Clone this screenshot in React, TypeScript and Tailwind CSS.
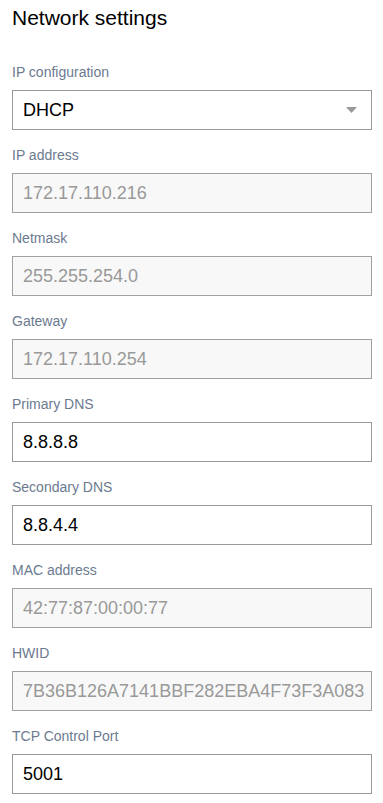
import React from 'react';

type Field = { label: string; value: string; disabled?: boolean; select?: boolean };

const FIELDS: Field[] = [
  { label: 'IP configuration', value: 'DHCP', select: true },
  { label: 'IP address', value: '172.17.110.216', disabled: true },
  { label: 'Netmask', value: '255.255.254.0', disabled: true },
  { label: 'Gateway', value: '172.17.110.254', disabled: true },
  { label: 'Primary DNS', value: '8.8.8.8' },
  { label: 'Secondary DNS', value: '8.8.4.4' },
  { label: 'MAC address', value: '42:77:87:00:00:77', disabled: true },
  { label: 'HWID', value: '7B36B126A7141BBF282EBA4F73F3A083', disabled: true },
  { label: 'TCP Control Port', value: '5001' },
];

export default function App() {
  return (
    <div className="min-h-screen bg-white px-3 pt-[4px] font-['Liberation_Sans',Arial,sans-serif]">
      <h1 className="text-[21px] leading-[28px] text-black">Network settings</h1>

      <div className="mt-[15px]">
        {FIELDS.map((f) => (
          <div key={f.label} className="pt-[15px]">
            <label className="block text-[14px] leading-[20px] text-[#6b7a8f]">{f.label}</label>
            <div
              className={
                'mt-2 flex h-10 w-[360px] items-center justify-between overflow-hidden border px-[10px] ' +
                (f.disabled ? 'border-[#a0a0a0] bg-[#f8f8f8]' : 'border-[#999] bg-white')
              }
            >
              <span
                className={
                  'whitespace-nowrap text-[18px] ' + (f.disabled ? 'text-[#999]' : 'text-black')
                }
              >
                {f.value}
              </span>
              {f.select && (
                <svg width="11" height="6" viewBox="0 0 11 6" className="mr-[4px] shrink-0">
                  <path d="M0 0h11L5.5 6z" fill="#999" />
                </svg>
              )}
            </div>
          </div>
        ))}
      </div>
    </div>
  );
}
